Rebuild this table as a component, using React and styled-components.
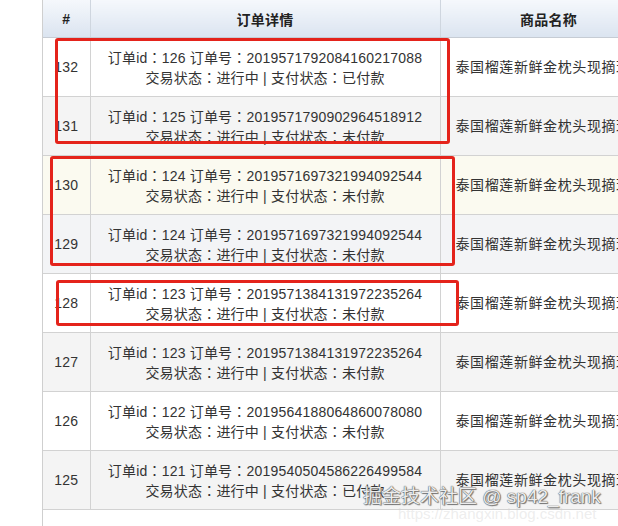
import React from "react";
import styled, { createGlobalStyle } from "styled-components";

const Global = createGlobalStyle`
  html, body { margin: 0; padding: 0; background: #fff; overflow: hidden; }
  body { font-family: "Liberation Sans", "Noto Sans CJK SC", sans-serif; color: #333; }
`;

const Page = styled.div`
  position: relative;
  width: 618px;
  height: 526px;
  overflow: hidden;
  padding-left: 42px;
  box-sizing: border-box;
`;

const Frame = styled.div`
  border-left: 1px solid #cfcfcf;
  height: 100%;
  width: 620px;
`;

const Table = styled.table`
  border-collapse: collapse;
  table-layout: fixed;
  width: 614px;
  font-size: 14px;
`;

const Head = styled.th`
  height: 37px;
  padding: 0;
  font-weight: bold;
  font-size: 14px;
  color: #222;
  letter-spacing: 0.3px;
  background: linear-gradient(#f5f8fc, #dbe4f0);
  border-right: 1px solid #cfd6df;
  border-bottom: 1px solid #c6ccd4;
  text-align: center;
`;

const Row = styled.tr`
  background: ${(p) => p.$bg};
`;

const Cell = styled.td`
  height: 58px;
  padding: 0;
  border-right: 1px solid #d2d2d2;
  border-bottom: 1px solid #d2d2d2;
  text-align: ${(p) => p.$align || "center"};
  padding-left: ${(p) => (p.$align === "left" ? "15px" : "0")};
  letter-spacing: ${(p) => (p.$align === "left" ? "0.6px" : "0.2px")};
  white-space: nowrap;
  overflow: hidden;
  line-height: 19px;
  color: #333;
`;

const Line = styled.div`
  padding-top: ${(p) => (p.$first ? "2px" : "0")};
`;

const Colon = styled.span`
  font-family: "Noto Sans CJK TC", "Noto Sans CJK SC", sans-serif;
`;

const Mark = styled.div`
  position: absolute;
  border: 3px solid #e4231b;
  border-radius: 3px;
  box-sizing: border-box;
`;

const Watermark = styled.div`
  position: absolute;
  left: 363px;
  top: 486px;
  font-size: 19px;
  line-height: 22px;
  color: #ececec;
  white-space: nowrap;
  text-shadow: 0 0 1px #555, 0 0 1px #555, 1px 1px 1px #777;
`;

const Url = styled.div`
  position: absolute;
  left: 398px;
  top: 505px;
  font-size: 15px;
  color: rgba(210, 210, 210, 0.4);
  white-space: nowrap;
`;

const rows = [
  { n: 132, id: 126, no: "2019571792084160217088", pay: "已付款", bg: "#ffffff" },
  { n: 131, id: 125, no: "2019571790902964518912", pay: "未付款", bg: "#f4f4f4" },
  { n: 130, id: 124, no: "2019571697321994092544", pay: "未付款", bg: "#fbfaf0" },
  { n: 129, id: 124, no: "2019571697321994092544", pay: "未付款", bg: "#f3f4f6" },
  { n: 128, id: 123, no: "2019571384131972235264", pay: "未付款", bg: "#ffffff" },
  { n: 127, id: 123, no: "2019571384131972235264", pay: "未付款", bg: "#f4f4f4" },
  { n: 126, id: 122, no: "2019564188064860078080", pay: "未付款", bg: "#ffffff" },
  { n: 125, id: 121, no: "2019540504586226499584", pay: "已付款", bg: "#f4f4f4" },
];

const product = "泰国榴莲新鲜金枕头现摘现发";

export default function App() {
  return (
    <>
      <Global />
      <Page>
        <Frame>
          <Table>
            <colgroup>
              <col style={{ width: 47 }} />
              <col style={{ width: 350 }} />
              <col style={{ width: 217 }} />
            </colgroup>
            <thead>
              <tr>
                <Head>#</Head>
                <Head>订单详情</Head>
                <Head>商品名称</Head>
              </tr>
            </thead>
            <tbody>
              {rows.map((r) => (
                <Row key={r.n} $bg={r.bg}>
                  <Cell>{r.n}</Cell>
                  <Cell>
                    <Line $first>
                      订单id<Colon>：</Colon>{r.id} 订单号<Colon>：</Colon>{r.no}
                    </Line>
                    <Line>
                      交易状态<Colon>：</Colon>进行中 | 支付状态<Colon>：</Colon>{r.pay}
                    </Line>
                  </Cell>
                  <Cell $align="left">{product}</Cell>
                </Row>
              ))}
            </tbody>
          </Table>
        </Frame>
        <Mark style={{ left: 55, top: 38, width: 395, height: 106 }} />
        <Mark style={{ left: 50, top: 156, width: 405, height: 110 }} />
        <Mark style={{ left: 56, top: 280, width: 403, height: 46 }} />
        <Url>https://zhangxin.blog.csdn.net</Url>
        <Watermark>掘金技术社区 @ sp42_frank</Watermark>
      </Page>
    </>
  );
}
